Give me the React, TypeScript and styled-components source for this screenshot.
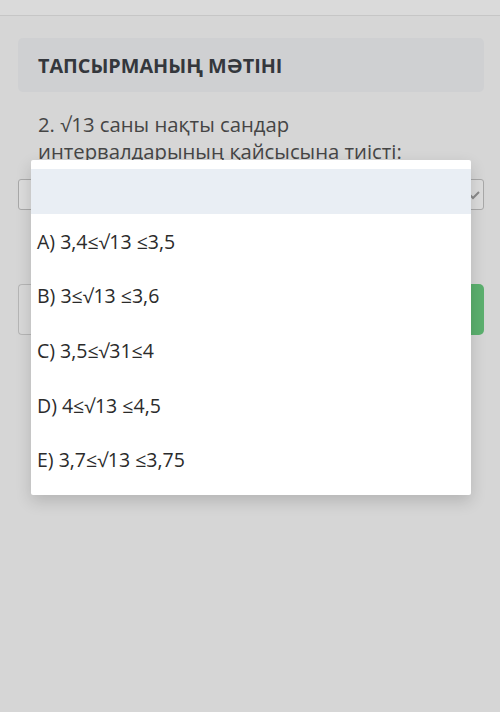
import React from "react";
import styled, { createGlobalStyle } from "styled-components";

const Global = createGlobalStyle`
  html, body { margin: 0; padding: 0; }
  body {
    background: #d6d6d6;
    font-family: "Open Sans", "Noto Sans", sans-serif;
    width: 500px;
    height: 712px;
    overflow: hidden;
  }
`;

const Page = styled.div`
  position: relative;
  width: 500px;
  height: 712px;
  background: #d6d6d6;
`;

const TopBar = styled.div`
  height: 15px;
  background: #dadada;
  border-bottom: 1px solid #c6c6c6;
`;

const Content = styled.div`
  padding: 22px 16px 0 18px;
  display: flex;
  flex-direction: column;
`;

const HeaderCard = styled.div`
  height: 54px;
  background: #cfd0d2;
  border-radius: 5px;
  display: flex;
  align-items: center;
  padding: 0 20px;
`;

const Title = styled.h2`
  margin: 0;
  font-size: 19.8px;
  font-weight: 700;
  color: #34373c;
  letter-spacing: 0;
`;

const Question = styled.p`
  margin: 19px 0 0 20px;
  font-size: 20.3px;
  line-height: 27px;
  color: #454545;
`;

const SelectBox = styled.div`
  margin-top: 14px;
  height: 29px;
  border: 1px solid #a9a9a9;
  border-radius: 3px;
  background: #dcdcdc;
  display: flex;
  align-items: center;
  justify-content: flex-end;
  padding-right: 3px;
`;

const AnswerRow = styled.div`
  margin-top: 74px;
  display: flex;
  height: 51px;
`;

const AnswerInput = styled.div`
  flex: 1;
  border: 1px solid #b6b6b6;
  border-right: none;
  border-radius: 4px 0 0 4px;
  background: #d8d8d8;
`;

const GreenButton = styled.div`
  width: 40px;
  background: #5bb06e;
  border-radius: 0 5px 5px 0;
`;

const Dropdown = styled.ul`
  position: absolute;
  left: 31px;
  top: 160px;
  width: 440px;
  margin: 0;
  padding: 9px 0 8px;
  list-style: none;
  background: #ffffff;
  border-radius: 2px;
  box-shadow: 0 6px 16px rgba(0, 0, 0, 0.16);
  box-sizing: border-box;
`;

const Option = styled.li<{ $highlight?: boolean }>`
  height: ${(p) => (p.$highlight ? "45px" : "54.6px")};
  display: flex;
  align-items: center;
  padding: 0 6px;
  background: ${(p) => (p.$highlight ? "#e9eef4" : "transparent")};
  font-size: 19.5px;
  color: #2b2b2b;
`;

const options = [
  "A) 3,4≤√13 ≤3,5",
  "B) 3≤√13 ≤3,6",
  "C) 3,5≤√31≤4",
  "D) 4≤√13 ≤4,5",
  "E) 3,7≤√13 ≤3,75",
];

export default function App() {
  return (
    <Page>
      <Global />
      <TopBar />
      <Content>
        <HeaderCard>
          <Title>ТАПСЫРМАНЫҢ МӘТІНІ</Title>
        </HeaderCard>
        <Question>
          2. √13 саны нақты сандар
          <br />
          интервалдарының қайсысына тиісті:
        </Question>
        <SelectBox>
          <svg width="14" height="12" viewBox="0 0 14 12">
            <path d="M1 3 L7 9 L13 3" fill="none" stroke="#8a8a8a" strokeWidth="2" />
          </svg>
        </SelectBox>
        <AnswerRow>
          <AnswerInput />
          <GreenButton />
        </AnswerRow>
      </Content>
      <Dropdown>
        <Option $highlight />
        {options.map((o) => (
          <Option key={o}>{o}</Option>
        ))}
      </Dropdown>
    </Page>
  );
}
